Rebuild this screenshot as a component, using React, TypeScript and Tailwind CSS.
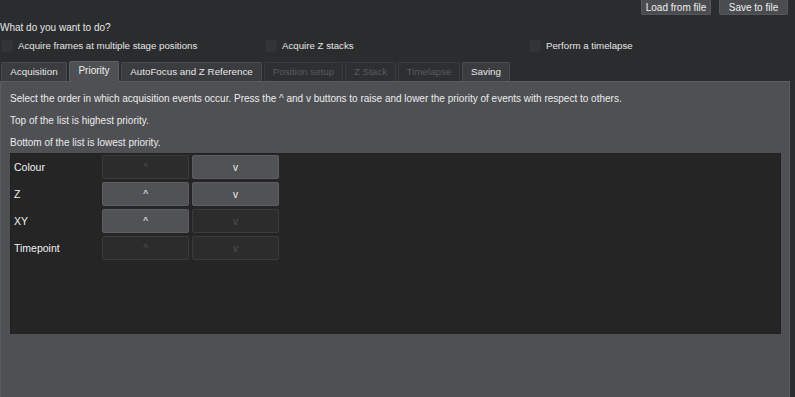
import React from "react";

const font = { fontFamily: '"Liberation Sans", Arial, sans-serif' };

function Check({ label, className }: { label: string; className?: string }) {
  return (
    <div className={"flex items-center gap-[5px] " + (className ?? "")}>
      <div className="w-[12px] h-[12px] bg-[#333437] border border-[#2f3033]" />
      <span className="text-[9.7px] text-[#e6e6e6]">{label}</span>
    </div>
  );
}

function Tab({ label, state, w }: { label: string; state: "normal" | "active" | "disabled"; w: string }) {
  if (state === "active") {
    return (
      <div className={w + " h-[21px] -mb-[1px] flex items-center justify-center bg-[#4e5054] border border-b-0 border-[#5c5e62] rounded-t-[2px] text-[10px] text-[#f0f0f0] relative z-10"}>
        <span className="-mt-[3px]">{label}</span>
      </div>
    );
  }
  return (
    <div
      className={
        w +
        " h-[19px] flex items-center justify-center border border-b-0 rounded-t-[2px] text-[9.8px] " +
        (state === "disabled"
          ? "bg-[#2e2f31] border-[#3a3b3e] text-[#595a5d]"
          : "bg-[#3b3c3f] border-[#4a4b4e] text-[#e6e6e6]")
      }
    >
      {label}
    </div>
  );
}

function Btn({ label, enabled }: { label: string; enabled: boolean }) {
  return (
    <div
      className={
        "w-[87px] h-[24px] flex items-center justify-center rounded-[2px] border text-[10px] " +
        (enabled
          ? "bg-[#505256] border-[#5c5e62] text-[#f0f0f0]"
          : "bg-[#2c2c2d] border-[#3b3b3c] text-[#505152]")
      }
    >
      {label}
    </div>
  );
}

const rows: { name: string; up: boolean; down: boolean }[] = [
  { name: "Colour", up: false, down: true },
  { name: "Z", up: true, down: true },
  { name: "XY", up: true, down: false },
  { name: "Timepoint", up: false, down: false },
];

export default function App() {
  return (
    <div className="w-[795px] h-[397px] bg-[#2b2c2e] overflow-hidden flex flex-col" style={font}>
      <div className="h-[15px] flex justify-end gap-[8px] pr-[7px]">
        <div className="w-[70px] h-[15px] flex items-center justify-center bg-[#4a4c50] rounded-b-[2px] border-x border-b border-[#55575b] text-[10px] text-[#f0f0f0]">
          Load from file
        </div>
        <div className="w-[69px] h-[15px] flex items-center justify-center bg-[#4a4c50] rounded-b-[2px] border-x border-b border-[#55575b] text-[10px] text-[#f0f0f0]">
          Save to file
        </div>
      </div>
      <div className="h-[24px] flex items-center pt-[0px] text-[10px] text-[#e6e6e6]">What do you want to do?</div>
      <div className="h-[14px] flex items-center">
        <Check label="Acquire frames at multiple stage positions" className="w-[265px] pl-[1px]" />
        <Check label="Acquire Z stacks" className="w-[264px]" />
        <Check label="Perform a timelapse" />
      </div>
      <div className="h-[8px]" />
      <div className="h-[20px] flex items-end gap-[2px] pl-[1px]">
        <Tab label="Acquisition" state="normal" w="w-[66px]" />
        <Tab label="Priority" state="active" w="w-[50px]" />
        <Tab label="AutoFocus and Z Reference" state="normal" w="w-[141px]" />
        <Tab label="Position setup" state="disabled" w="w-[79px]" />
        <Tab label="Z Stack" state="disabled" w="w-[51px]" />
        <Tab label="Timelapse" state="disabled" w="w-[62px]" />
        <Tab label="Saving" state="normal" w="w-[48px]" />
      </div>
      <div className="flex-1 w-[790px] bg-[#4e5054] border border-[#5a5c60] border-b-0 flex flex-col pl-[9px] pr-[8px] text-[10px] text-[#ececec]">
        <div className="h-[22px] flex items-end pb-[3px] mt-[5px]">
          Select the order in which acquisition events occur. Press the ^ and v buttons to raise and lower the priority of events with respect to others.
        </div>
        <div className="h-[22px] flex items-end pb-[3px]">Top of the list is highest priority.</div>
        <div className="h-[22px] flex items-end pb-[3px]">Bottom of the list is lowest priority.</div>
        <div className="h-[181px] bg-[#252525] border border-[#222] pt-[1px] flex flex-col gap-[3px]">
          {rows.map((r) => (
            <div key={r.name} className="flex items-center h-[24px]">
              <div className="w-[91px] pl-[3px] pt-[2px] text-[10.5px] text-[#f0f0f0]">{r.name}</div>
              <div className="flex gap-[3px]">
                <Btn label="^" enabled={r.up} />
                <Btn label="v" enabled={r.down} />
              </div>
            </div>
          ))}
        </div>
      </div>
    </div>
  );
}
